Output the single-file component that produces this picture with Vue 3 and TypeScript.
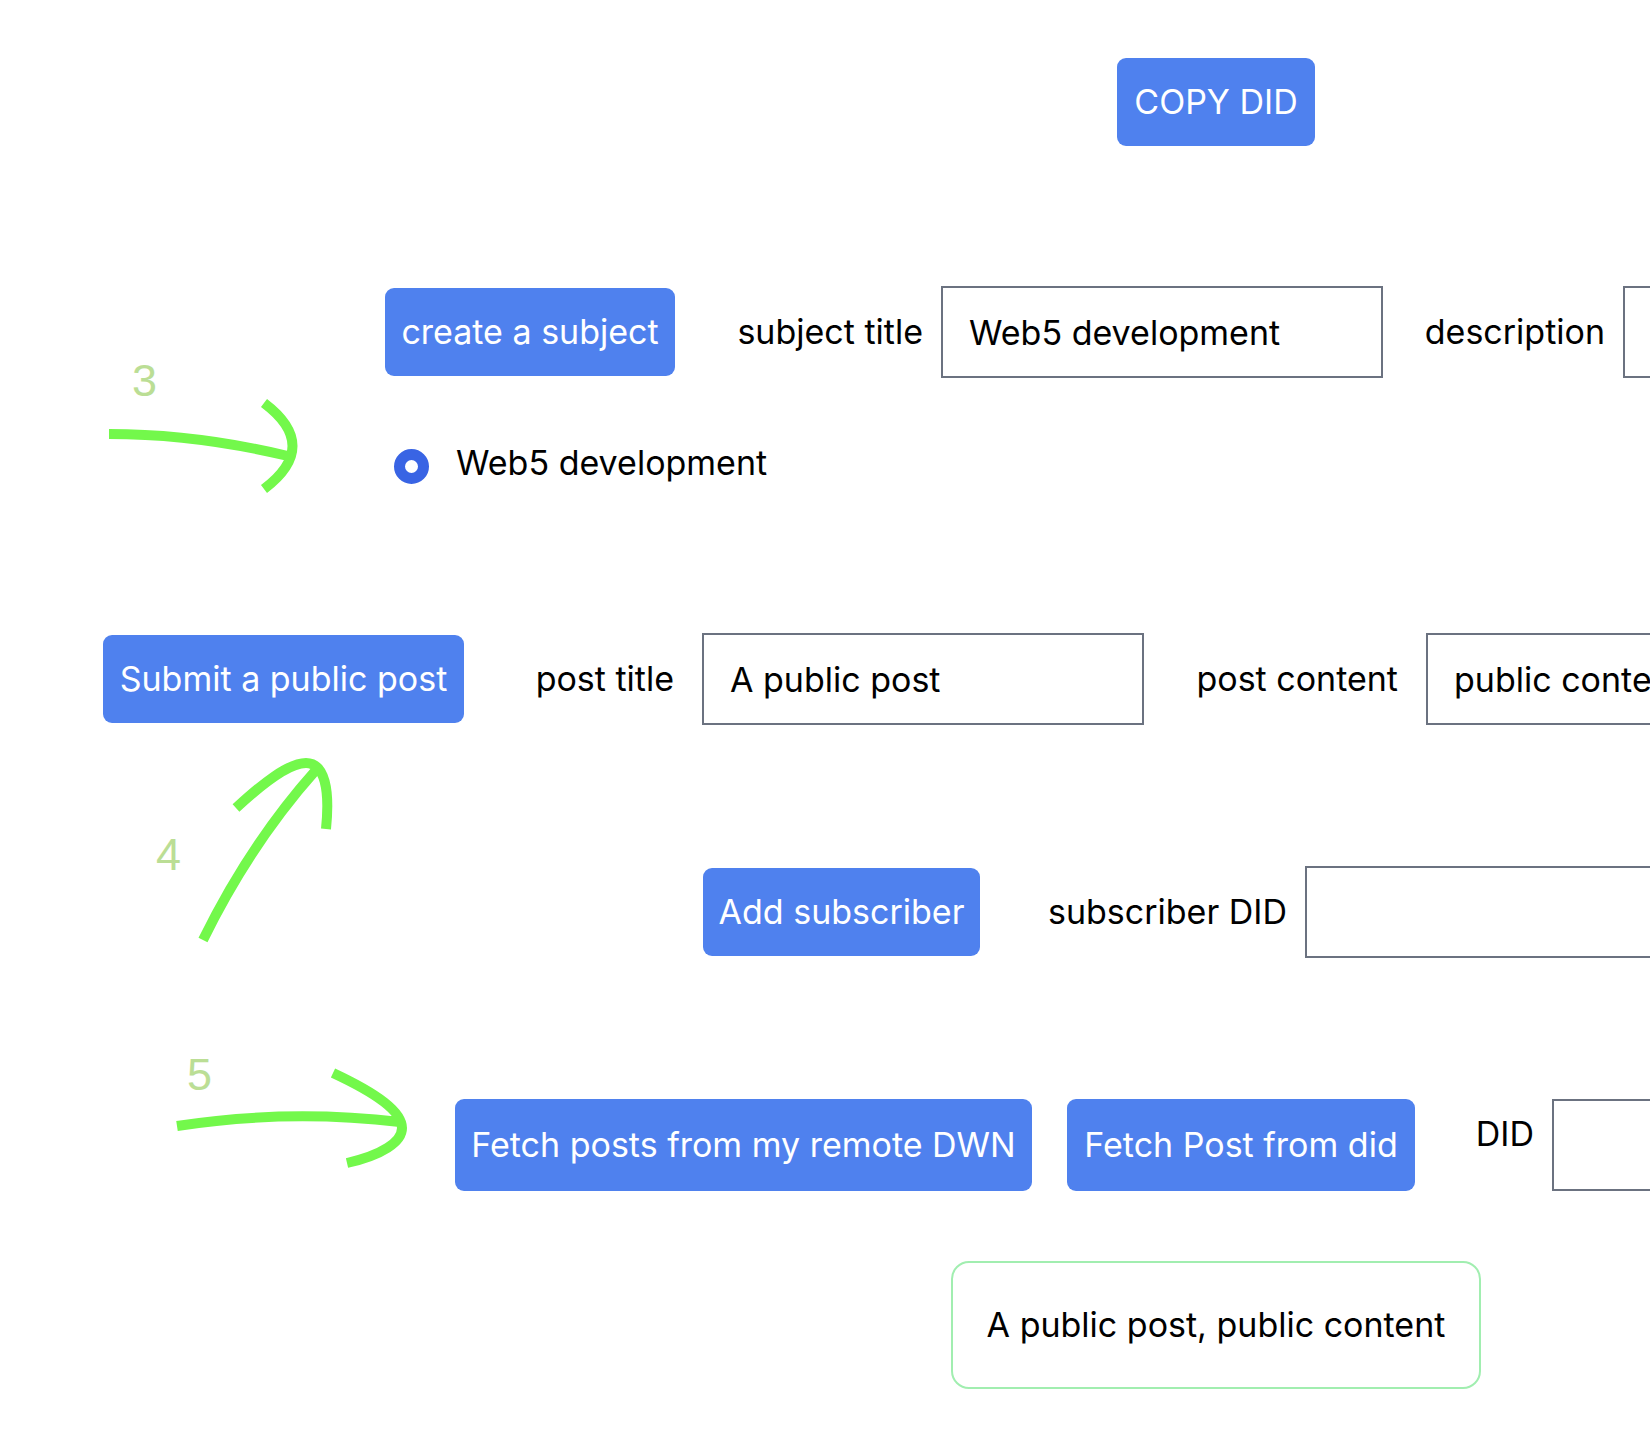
<script setup lang="ts">
import { ref } from 'vue'

const subjects = ref<string[]>(['Web5 development'])
const selectedSubject = ref('Web5 development')
const subjectTitle = ref('Web5 development')
const subjectDescription = ref('')
const postTitle = ref('A public post')
const postContent = ref('public content')
const subscriberDid = ref('')
const fetchDid = ref('')
const posts = ref([{ title: 'A public post', content: 'public content' }])
</script>

<template>
  <main class="page">
    <header class="row row-copy">
      <button type="button" class="btn btn-copy">COPY DID</button>
    </header>

    <section class="subjects">
      <form class="row" @submit.prevent>
        <button type="submit" class="btn btn-subject">create a subject</button>
        <label class="label label-subject" for="subject-title">subject title</label>
        <input id="subject-title" v-model="subjectTitle" class="field" type="text" />
        <label class="label label-description" for="subject-description">description</label>
        <input id="subject-description" v-model="subjectDescription" class="field" type="text" />
      </form>
      <label v-for="subject in subjects" :key="subject" class="choice">
        <input v-model="selectedSubject" class="radio" type="radio" name="subject" :value="subject" />
        <span>{{ subject }}</span>
      </label>
    </section>

    <form class="row row-post" @submit.prevent>
      <button type="submit" class="btn btn-post">Submit a public post</button>
      <label class="label label-post-title" for="post-title">post title</label>
      <input id="post-title" v-model="postTitle" class="field" type="text" />
      <label class="label label-post-content" for="post-content">post content</label>
      <input id="post-content" v-model="postContent" class="field" type="text" />
    </form>

    <form class="row row-subscriber" @submit.prevent>
      <button type="submit" class="btn btn-subscriber">Add subscriber</button>
      <label class="label label-subscriber" for="subscriber-did">subscriber DID</label>
      <input id="subscriber-did" v-model="subscriberDid" class="field" type="text" />
    </form>

    <form class="row row-fetch" @submit.prevent>
      <button type="button" class="btn btn-remote">Fetch posts from my remote DWN</button>
      <button type="submit" class="btn btn-did">Fetch Post from did</button>
      <label class="label label-did" for="fetch-did">DID</label>
      <input id="fetch-did" v-model="fetchDid" class="field" type="text" />
    </form>

    <ul class="posts">
      <li v-for="post in posts" :key="post.title" class="post">{{ post.title }}, {{ post.content }}</li>
    </ul>

    <svg class="notes" width="450" height="1200" viewBox="0 0 450 1200">
      <g class="arrow">
        <path d="M109 434Q196 434 288 456M264 403Q321 446 264 489" />
        <path d="M203 940Q250 844 316 770M236 808C262 784 288 763 306 763C325 763 330 790 326 829" />
        <path d="M177 1126Q287 1109 400 1122M333 1073C378 1094 402 1112 402 1128C402 1142 382 1155 347 1163" />
      </g>
      <text x="132" y="396">3</text>
      <text x="156" y="870">4</text>
      <text x="187" y="1090">5</text>
    </svg>
  </main>
</template>

<style>
body {
  margin: 0;
  background: #fff;
}
</style>

<style scoped>
.page {
  position: relative;
  box-sizing: border-box;
  overflow: hidden;
  padding: 58px 0 55px;
  color: #000;
  font-family: Inter, 'Liberation Sans', sans-serif;
  font-size: 34px;
  line-height: 52px;
}

.row {
  display: flex;
  align-items: center;
  white-space: nowrap;
}

.row-copy {
  margin-bottom: 140px;
  padding-left: 1117px;
}

.subjects {
  height: 206px;
  margin-bottom: 141px;
  padding-left: 385px;
}

.row-post {
  margin-bottom: 141px;
  padding-left: 103px;
}

.row-subscriber {
  margin-bottom: 141px;
  padding-left: 703px;
}

.row-fetch {
  align-items: stretch;
  margin-bottom: 70px;
  padding-left: 455px;
}

.btn {
  box-sizing: border-box;
  flex: none;
  min-height: 88px;
  padding: 0;
  border: 0;
  border-radius: 9px;
  background: #4f81ee;
  color: #fff;
  font: inherit;
  text-align: center;
  cursor: pointer;
}

.btn-copy {
  width: 198px;
}

.btn-subject {
  width: 290px;
}

.btn-post {
  width: 361px;
}

.btn-subscriber {
  width: 277px;
}

.btn-remote {
  width: 577px;
  margin-right: 35px;
}

.btn-did {
  width: 348px;
}

.label {
  flex: none;
  box-sizing: border-box;
  padding-right: 18px;
  text-align: right;
}

.label-subject {
  width: 266px;
}

.label-description {
  width: 240px;
}

.label-post-title {
  width: 238px;
  padding-right: 28px;
}

.label-post-content {
  width: 282px;
  padding-right: 28px;
}

.label-subscriber {
  width: 325px;
}

.label-did {
  width: 137px;
  padding-top: 9px;
}

.field {
  box-sizing: border-box;
  flex: none;
  width: 442px;
  height: 92px;
  padding: 0 26px;
  border: 2px solid #6b7280;
  border-radius: 0;
  outline: 0;
  background: #fff;
  color: inherit;
  font: inherit;
}

.choice {
  display: flex;
  align-items: center;
  gap: 27px;
  width: max-content;
  margin-top: 59px;
  padding-left: 9px;
}

.radio {
  appearance: none;
  width: 35px;
  height: 35px;
  margin: 6px 0 0;
  border-radius: 50%;
  background: #fff;
  border: 2px solid #6b7280;
}

.radio:checked {
  border: 11px solid #3964e4;
}

.posts {
  margin: 0;
  padding: 0 0 0 951px;
  list-style: none;
}

.post {
  box-sizing: border-box;
  width: 530px;
  padding: 36px 0;
  border: 2px solid #a1eeb0;
  border-radius: 18px;
  text-align: center;
  white-space: nowrap;
}

.notes {
  position: absolute;
  top: 0;
  left: 0;
  pointer-events: none;
}

.arrow {
  fill: none;
  stroke: #73f84b;
  stroke-width: 10px;
}

.notes text {
  fill: #bbde95;
  font-family: 'Liberation Sans', Arial, sans-serif;
  font-size: 45px;
}
</style>
